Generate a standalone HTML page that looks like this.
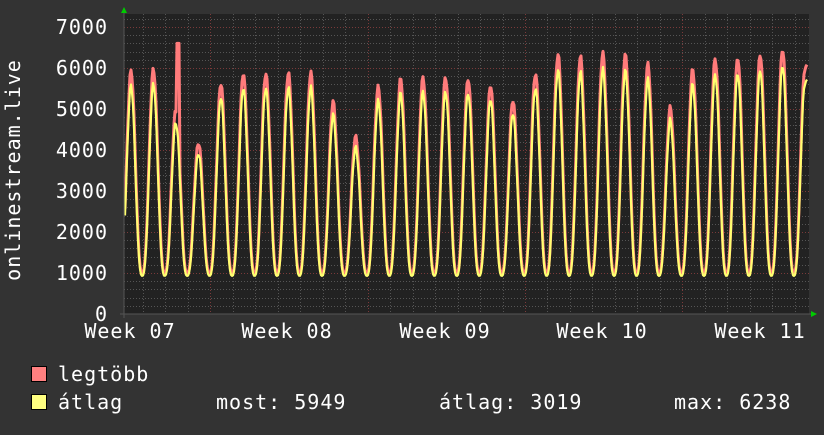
<!DOCTYPE html>
<html><head><meta charset="utf-8"><style>
html,body{margin:0;padding:0;background:#333;}
body{width:824px;height:430px;overflow:hidden;}
svg text{font-family:"DejaVu Sans Mono","Liberation Mono",monospace;fill:#fff;font-size:20px;letter-spacing:1px;}
</style></head><body>
<svg id="g" width="824" height="430" xmlns="http://www.w3.org/2000/svg">
<rect x="0" y="0" width="824" height="430" fill="#333"/>
<rect x="124" y="14" width="685" height="300" fill="#222"/>
<g id="grid"></g>
<g id="lines"></g>
<line x1="124" y1="10" x2="124" y2="318" stroke="#555" stroke-width="1"/>
<line x1="120" y1="314" x2="812" y2="314" stroke="#555" stroke-width="1"/>
<polygon points="121,13 127,13 124,7" fill="#0c0"/>
<polygon points="811,311 811,317 817,314" fill="#0c0"/>
<text x="108" y="34" text-anchor="end">7000</text>
<text x="108" y="75" text-anchor="end">6000</text>
<text x="108" y="116" text-anchor="end">5000</text>
<text x="108" y="157" text-anchor="end">4000</text>
<text x="108" y="198" text-anchor="end">3000</text>
<text x="108" y="239" text-anchor="end">2000</text>
<text x="108" y="280" text-anchor="end">1000</text>
<text x="108" y="321" text-anchor="end">0</text>
<text x="130" y="338" text-anchor="middle">Week 07</text>
<text x="287" y="338" text-anchor="middle">Week 08</text>
<text x="445" y="338" text-anchor="middle">Week 09</text>
<text x="602" y="338" text-anchor="middle">Week 10</text>
<text x="760" y="338" text-anchor="middle">Week 11</text>
<text transform="translate(20,170) rotate(-90)" text-anchor="middle">onlinestream.live</text>
<rect x="31.5" y="366.5" width="15" height="15" fill="#ff8080" stroke="#000"/>
<rect x="31.5" y="394.5" width="15" height="15" fill="#ffff80" stroke="#000"/>
<text x="58" y="381">legtöbb</text>
<text x="58" y="409">átlag</text>
<text x="216" y="409">most: 5949</text>
<text x="439" y="409">átlag: 3019</text>
<text x="674" y="409">max: 6238</text>
</svg>
<script>
var NS="http://www.w3.org/2000/svg";
var grid=document.getElementById('grid'),lines=document.getElementById('lines');
function L(x1,y1,x2,y2,c){var l=document.createElementNS(NS,'line');l.setAttribute('x1',x1);l.setAttribute('y1',y1);l.setAttribute('x2',x2);l.setAttribute('y2',y2);l.setAttribute('stroke',c);l.setAttribute('stroke-dasharray','1,2');grid.appendChild(l);}
for(var v=200;v<=7200;v+=200){var y=Math.round(314-v*0.041)+0.5;L(124,y,809,y,(v%1000==0)?'#7a3a3a':'#555');}
for(var x=143;x<809;x+=22.47){var xx=Math.round(x)+0.5;var maj=[210,367,524,682].some(function(m){return Math.abs(m-x)<3;});L(xx,14,xx,314,maj?'#7a3a3a':'#555');}
var peaks=[5900,5950,5000,4200,5600,5850,5900,5900,5850,5150,4350,5550,5700,5750,5800,5750,5550,5200,5900,6350,6250,6350,6350,6100,5000,5950,6250,6250,6300,6450,6050];
function val(x,avg){var t=(x-131)/22.47;if(t>30)t=30;var k=Math.round(t);if(k<0)k=0;if(k>30)k=30;var ph=t-Math.round(t);
var p=peaks[k];var mn=avg?930:1000;var mx=avg?p*0.94:p;
var c=(1+Math.cos(ph*2*Math.PI))/2;c=Math.pow(c,1.4);
var n=Math.sin(x*1.7)*60+Math.sin(x*0.63)*40;
var v=mn+(mx-mn)*c+n*c;
if(!avg&&x>=177&&x<=179)v=6600;
return v;}
function path(avg){var d='';for(var x=125;x<=807;x+=1){var y=314-val(x,avg)*0.041;d+=(x==125?'M':'L')+x+','+y.toFixed(1);}return d;}
[[false,'#ff7b7b',3],[true,'#ffff70',2.2]].forEach(function(a){var p=document.createElementNS(NS,'path');p.setAttribute('d',path(a[0]));p.setAttribute('fill','none');p.setAttribute('stroke',a[1]);p.setAttribute('stroke-width',a[2]);p.setAttribute('stroke-linejoin','round');lines.appendChild(p);});
</script>
</body></html>
